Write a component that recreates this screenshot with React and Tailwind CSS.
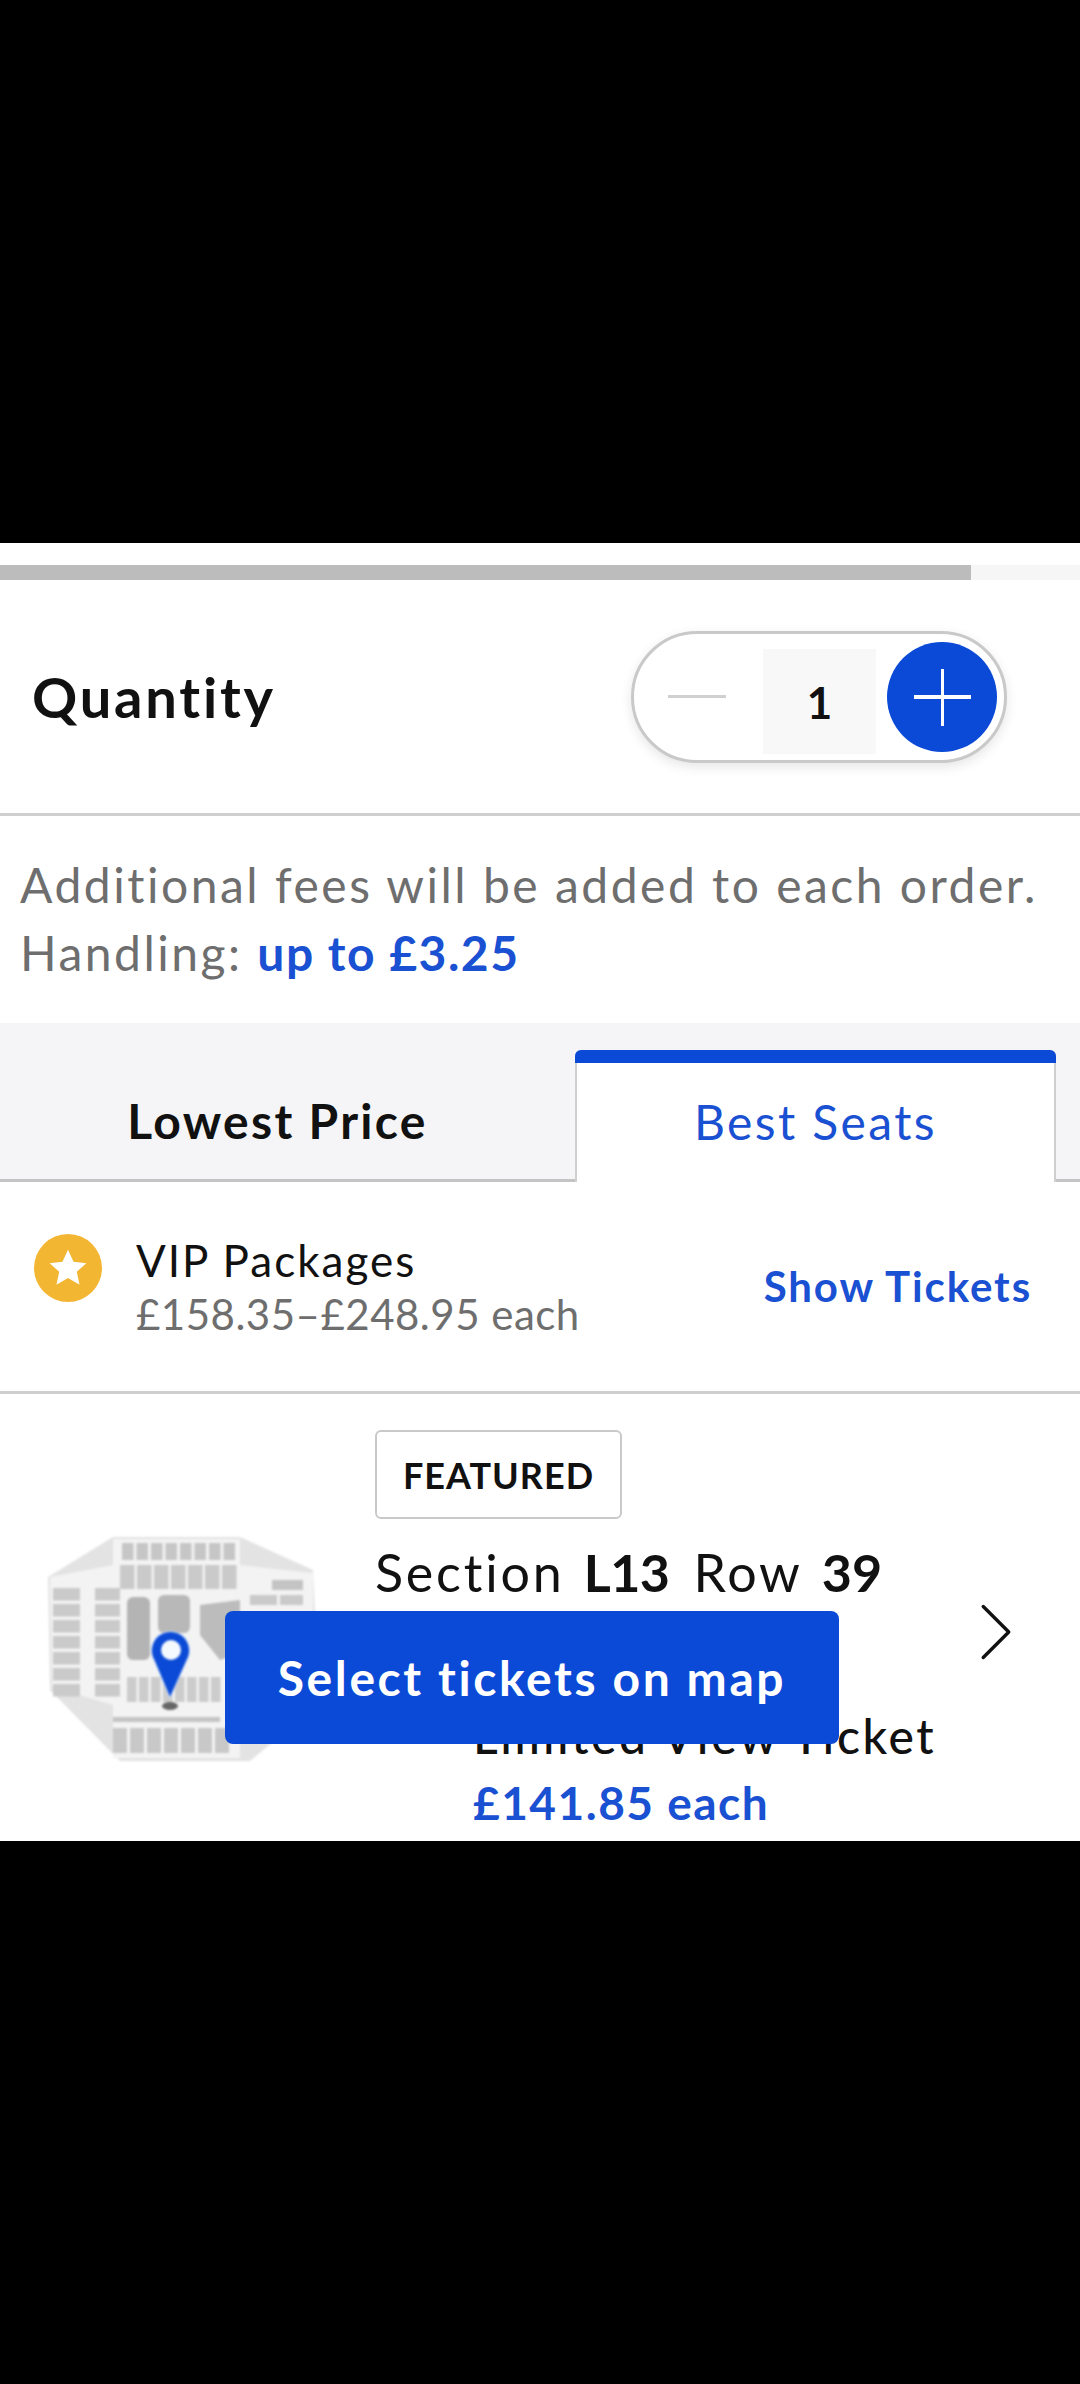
import React from "react";
import { ChevronRight } from "lucide-react";

const rows = [0, 1, 2, 3, 4, 5, 6];
const eight = [0, 1, 2, 3, 4, 5, 6, 7];
const seven = [0, 1, 2, 3, 4, 5, 6];

// little seat map, it's a drawing in the reference
const SeatMap = () => (
  <svg width="273" height="232" viewBox="0 0 273 232" className="blur-[1px]">
    <path d="M68 2H195L268 35L272 118V170L205 226H75L5 155L3 42Z" fill="#e3e3e3" />
    <path d="M5 42L68 30V4H195V30L268 38V160L195 170V223H68V170L7 152Z" fill="#f3f3f3" />
    {eight.map((i) => (
      <rect key={i} x={77 + i * 14.500} y={8} width={11.500} height={17} fill="#c6c6c6" />
    ))}
    {seven.map((i) => (
      <rect key={i} x={75 + i * 17} y={30} width={14.500} height={24} fill="#cacaca" />
    ))}
    {rows.map((i) => (
      <g key={i}>
        <rect x={8} y={53 + i * 16} width={27} height={12.500} fill="#cacaca" />
        <rect x={50} y={53 + i * 16} width={25} height={12.500} fill="#cacaca" />
      </g>
    ))}
    <rect x={227} y={45} width={31} height={10} fill="#c4c4c4" />
    <rect x={205} y={60} width={27} height={10} fill="#cacaca" />
    <rect x={235} y={60} width={23} height={10} fill="#cacaca" />
    <rect x={82} y={62} width={23} height={63} rx={6} fill="#b4b4b4" />
    <rect x={113} y={60} width={32} height={38} rx={6} fill="#b8b8b8" />
    <path d="M155 70L195 65V118L175 125L155 100Z" fill="#bcbcbc" />
    {eight.map((i) => (
      <rect key={i} x={82 + i * 12} y={142} width={9.500} height={25} fill="#cccccc" />
    ))}
    <rect x={68} y={182} width={107} height={5} fill="#c4c4c4" />
    {seven.map((i) => (
      <rect key={i} x={68 + i * 17} y={193} width={14} height={25} fill="#c8c8c8" />
    ))}
    <ellipse cx="125" cy="171" rx="8" ry="4" fill="#666" />
    <path d="M125 163L109 125A19 19 0 1 1 142 125Z" fill="#0b4ad6" stroke="#cfe4ff" strokeWidth="1" />
    <circle cx="126" cy="115" r="10" fill="#f4f9ff" />
  </svg>
);

export default function App() {
  return (
    <div className="min-h-[2384px] bg-black font-['Lato',sans-serif]">
      <div className="h-[543px]" />
      <main className="relative h-[1298px] overflow-hidden bg-white">
        <div className="pt-[22px]">
          <div className="h-[15px] bg-[#f6f6f6]">
            <div className="h-full w-[971px] bg-[#bcbcbc]" />
          </div>
        </div>

        <div className="flex h-[236px] items-center justify-between border-b-[3px] border-[#cfcfcf] pl-[32px] pr-[73px]">
          <h2 className="text-[56px] font-bold tracking-[2.8px] text-[#111]">Quantity</h2>
          <div className="flex h-[132px] w-[376px] items-center rounded-full border-[3px] border-[#c9c9c9] bg-white shadow-[0_4px_12px_rgba(0,0,0,0.1)]">
            <div className="ml-[34px] h-[3px] w-[58px] bg-[#d0d0d0]" />
            <div className="ml-[37px] mt-[10px] flex h-[105px] w-[113px] items-center justify-center bg-[#f8f8f9] text-[44px] font-bold text-[#111]">
              1
            </div>
            <button className="relative ml-[11px] h-[110px] w-[110px] rounded-full bg-[#0b4ad6]">
              <span className="absolute left-[27px] top-[53px] h-[4px] w-[57px] bg-white" />
              <span className="absolute left-[54px] top-[27px] h-[57px] w-[3px] bg-white" />
            </button>
          </div>
        </div>

        <div className="h-[207px] px-[20px] pt-[35px] text-[48px] leading-[68px] tracking-[2.5px] text-[#6e6e6e]">
          <p>Additional fees will be added to each order.</p>
          <p>
            Handling: <span className="font-bold tracking-[1.500px] text-[#1a50d2]">up to £3.25</span>
          </p>
        </div>

        <div className="flex h-[159px] items-end bg-[#f5f5f7]">
          <div className="flex h-[132px] w-[575px] items-center justify-center border-b-[3px] border-[#c4c4c4] pr-[20px] pt-[12px] text-[48px] font-bold tracking-[2.3px] text-[#111]">
            Lowest Price
          </div>
          <div className="flex h-[132px] w-[481px] flex-col rounded-t-[6px] border-x-[2px] border-[#cfcfcf] bg-white">
            <div className="-mx-[2px] h-[13px] rounded-t-[6px] bg-[#0b4ad6]" />
            <div className="flex flex-1 items-center justify-center pb-[2px] text-[48px] tracking-[2.4px] text-[#1a50d2]">
              Best Seats
            </div>
          </div>
          <div className="h-[132px] flex-1 border-b-[3px] border-[#c4c4c4]" />
        </div>

        <div className="flex h-[212px] items-center justify-between border-b-[3px] border-[#cfcfcf] pl-[34px] pr-[48px]">
          <div className="flex items-start gap-[34px]">
            <div className="mt-[1px] flex h-[68px] w-[68px] items-center justify-center rounded-full bg-[#f2b632]">
              <svg width="44" height="44" viewBox="0 0 24 24" fill="#fff">
                <path d="M12 2l3 6.600 7 .8-5.200 4.700 1.500 7-6.300-3.600-6.300 3.600 1.500-7L2 9.400l7-.8z" />
              </svg>
            </div>
            <div>
              <p className="text-[44px] leading-[54px] tracking-[2px] text-[#111]">VIP Packages</p>
              <p className="text-[42px] leading-[54px] tracking-[0.5px] text-[#6e6e6e]">£158.35–£248.95 each</p>
            </div>
          </div>
          <span className="text-[42px] font-bold tracking-[1.9px] text-[#1a50d2]">Show Tickets</span>
        </div>

        <div className="flex">
          <div className="w-[375px] pl-[45px] pt-[141px]">
            <SeatMap />
          </div>
          <div className="w-[600px] pt-[36px]">
            <span className="flex h-[89px] w-[247px] items-center justify-center rounded-[6px] border-[2px] border-[#c9c9c9] text-[36px] font-bold tracking-[1px] text-[#111]">
              FEATURED
            </span>
            <p className="mt-[20px] text-[52px] leading-[66px] tracking-[2.8px] text-[#111]">
              Section <b className="ml-[3px] tracking-[-0.5px]">L13</b>
              <span className="ml-[24px]">Row</span> <b className="ml-[4px] tracking-[0px]">39</b>
            </p>
            <p className="ml-[98px] mt-[101px] text-[48px] leading-[60px] font-medium tracking-[2.6px] text-[#111]">
              Limited View Ticket
            </p>
            <p className="ml-[98px] mt-[4px] text-[46px] leading-[66px] font-bold tracking-[1.5px] text-[#1a50d2]">
              £141.85 each
            </p>
          </div>
          <ChevronRight size={102} strokeWidth={0.8} className="ml-[-30px] mt-[187px] text-[#111]" />
        </div>

        <button className="absolute left-[225px] top-[1068px] h-[133px] w-[614px] rounded-[8px] bg-[#0b4ad6] text-[48px] font-bold tracking-[2.6px] text-white">
          Select tickets on map
        </button>
      </main>
    </div>
  );
}
